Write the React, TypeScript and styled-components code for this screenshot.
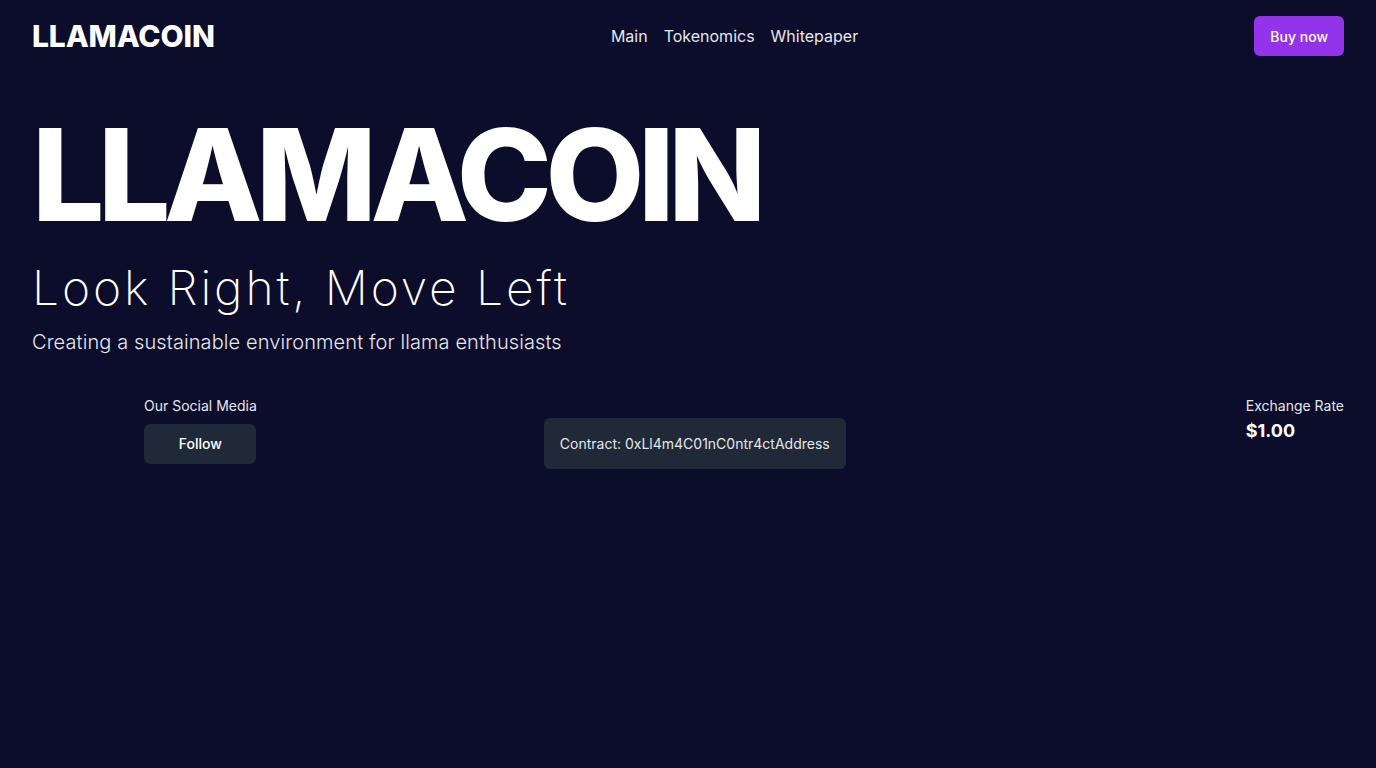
import React from "react";
import styled, { createGlobalStyle } from "styled-components";

const Global = createGlobalStyle`
  html, body { margin: 0; padding: 0; background: #0c0c2b; }
  body { font-family: Inter, "Noto Sans", sans-serif; color: #ffffff; }
  * { box-sizing: border-box; }
`;

const Page = styled.div`
  min-height: 768px;
  background: #0c0c2b;
  padding: 0 32px;
`;

const Header = styled.header`
  height: 72px;
  display: flex;
  align-items: center;
  justify-content: space-between;
`;

const Logo = styled.div`
  font-family: Inter, sans-serif;
  font-weight: 800;
  font-size: 30px;
  letter-spacing: -0.005em;
  color: #ffffff;
`;

const Nav = styled.nav`
  display: flex;
  gap: 16px;
`;

const NavLink = styled.a`
  font-size: 16px;
  color: #e5e7eb;
  text-decoration: none;
`;

const Button = styled.button<{ $variant: "primary" | "dark" }>`
  font-family: Inter, sans-serif;
  font-size: 14px;
  font-weight: 500;
  height: 40px;
  padding: 0 16px;
  border: none;
  border-radius: 6px;
  color: #ffffff;
  background: ${(p) => (p.$variant === "primary" ? "#9333ea" : "#1f2937")};
  width: ${(p) => (p.$variant === "dark" ? "112px" : "auto")};
`;

const Hero = styled.section`
  padding-top: 39px;
`;

const BigTitle = styled.h1`
  margin: 0;
  font-family: Inter, sans-serif;
  font-weight: 800;
  font-size: 128px;
  line-height: 1;
  letter-spacing: -0.05em;
`;

const Tagline = styled.h2`
  margin: 20px 0 0;
  font-weight: 200;
  font-size: 48px;
  line-height: 1.2;
  letter-spacing: 0.06em;
`;

const Sub = styled.p`
  margin: 13px 0 0;
  font-size: 20px;
  font-weight: 300;
  letter-spacing: 0.005em;
  color: #e5e7eb;
`;

const InfoRow = styled.div`
  display: flex;
  align-items: flex-start;
  margin-top: 42px;
  padding-left: 112px;
`;

const Stack = styled.div<{ $align?: string }>`
  display: flex;
  flex-direction: column;
  align-items: ${(p) => p.$align || "flex-start"};
  gap: 8px;
`;

const Label = styled.span`
  font-size: 14px;
  color: #e5e7eb;
  line-height: 20px;
`;

const Contract = styled.div`
  margin-left: 287px;
  margin-top: 22px;
  background: #1f2937;
  border-radius: 6px;
  padding: 16px;
  font-size: 14px;
  line-height: 19px;
  color: #e5e7eb;
`;

const Right = styled.div`
  margin-left: auto;
  display: flex;
  flex-direction: column;
  align-items: flex-start;
`;

const Rate = styled.span`
  font-size: 18px;
  font-weight: 700;
  line-height: 28px;
  margin-top: 1px;
`;

export default function App() {
  return (
    <>
      <Global />
      <Page>
        <Header>
          <Logo>LLAMACOIN</Logo>
          <Nav>
            <NavLink>Main</NavLink>
            <NavLink>Tokenomics</NavLink>
            <NavLink>Whitepaper</NavLink>
          </Nav>
          <Button $variant="primary">Buy now</Button>
        </Header>
        <Hero>
          <BigTitle>LLAMACOIN</BigTitle>
          <Tagline>Look Right, Move Left</Tagline>
          <Sub>Creating a sustainable environment for llama enthusiasts</Sub>
        </Hero>
        <InfoRow>
          <Stack $align="center">
            <Label>Our Social Media</Label>
            <Button $variant="dark">Follow</Button>
          </Stack>
          <Contract>Contract: 0xLl4m4C01nC0ntr4ctAddress</Contract>
          <Right>
            <Label>Exchange Rate</Label>
            <Rate>$1.00</Rate>
          </Right>
        </InfoRow>
      </Page>
    </>
  );
}
